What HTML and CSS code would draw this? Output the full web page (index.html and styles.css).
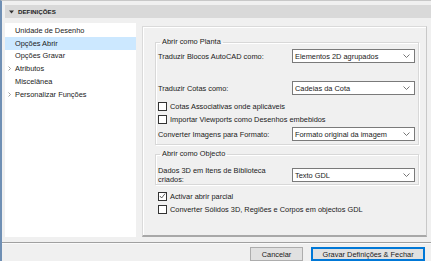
FILE: index.html
```html
<!DOCTYPE html>
<html>
<head>
<meta charset="utf-8">
<link rel="stylesheet" href="styles.css">
</head>
<body>
<div class="window">
  <div class="header">
    <svg class="tri" width="5" height="4" viewBox="0 0 5 4"><polygon points="0,0.5 5,0.5 2.5,3.5" fill="#333"/></svg>
    <span class="title">DEFINIÇÕES</span>
  </div>
  <div class="main">
    <ul class="sidebar">
      <li class="item">Unidade de Desenho</li>
      <li class="item selected">Opções Abrir</li>
      <li class="item">Opções Gravar</li>
      <li class="item"><svg class="arrow" width="3" height="5" viewBox="0 0 3 5"><polyline points="0.5,0.5 2.5,2.5 0.5,4.5" fill="none" stroke="#888" stroke-width="0.8"/></svg>Atributos</li>
      <li class="item">Miscelânea</li>
      <li class="item"><svg class="arrow" width="3" height="5" viewBox="0 0 3 5"><polyline points="0.5,0.5 2.5,2.5 0.5,4.5" fill="none" stroke="#888" stroke-width="0.8"/></svg>Personalizar Funções</li>
    </ul>
    <div class="content">
      <fieldset class="group g1">
        <legend>Abrir como Planta</legend>
        <div class="row r1">
          <span class="label">Traduzir Blocos AutoCAD como:</span>
          <div class="select"><span>Elementos 2D agrupados</span><svg class="chev" width="7" height="4" viewBox="0 0 7 4"><polyline points="0.5,0.5 3.5,3.5 6.5,0.5" fill="none" stroke="#666" stroke-width="0.9"/></svg></div>
        </div>
        <div class="row r2">
          <span class="label">Traduzir Cotas como:</span>
          <div class="select"><span>Cadeias da Cota</span><svg class="chev" width="7" height="4" viewBox="0 0 7 4"><polyline points="0.5,0.5 3.5,3.5 6.5,0.5" fill="none" stroke="#666" stroke-width="0.9"/></svg></div>
        </div>
        <div class="check c1"><span class="box"></span>Cotas Associativas onde aplicáveis</div>
        <div class="check c2"><span class="box"></span>Importar Viewports como Desenhos embebidos</div>
        <div class="row r3">
          <span class="label">Converter Imagens para Formato:</span>
          <div class="select"><span>Formato original da imagem</span><svg class="chev" width="7" height="4" viewBox="0 0 7 4"><polyline points="0.5,0.5 3.5,3.5 6.5,0.5" fill="none" stroke="#666" stroke-width="0.9"/></svg></div>
        </div>
      </fieldset>
      <fieldset class="group g2">
        <legend>Abrir como Objecto</legend>
        <div class="row r4">
          <span class="label">Dados 3D em Itens de Biblioteca<br>criados:</span>
          <div class="select"><span>Texto GDL</span><svg class="chev" width="7" height="4" viewBox="0 0 7 4"><polyline points="0.5,0.5 3.5,3.5 6.5,0.5" fill="none" stroke="#666" stroke-width="0.9"/></svg></div>
        </div>
      </fieldset>
      <div class="check c3"><span class="box"><svg width="8" height="8" viewBox="0 0 8 8"><polyline points="1,4 3,6.3 7,1.2" fill="none" stroke="#333" stroke-width="0.9"/></svg></span>Activar abrir parcial</div>
      <div class="check c4"><span class="box"></span>Converter Sólidos 3D, Regiões e Corpos em objectos GDL</div>
    </div>
  </div>
  <div class="separator"></div>
  <div class="footer">
    <button class="btn cancel">Cancelar</button>
    <button class="btn primary">Gravar Definições &amp; Fechar</button>
  </div>
</div>
</body>
</html>
```
FILE: styles.css
```css
* { box-sizing: border-box; }
html, body { margin: 0; padding: 0; }
body {
  width: 431px;
  height: 261px;
  overflow: hidden;
  background: #f0f0f0;
  font-family: "Liberation Sans", Arial, sans-serif;
  font-size: 7.4px;
  color: #1a1a1a;
}
.window {
  width: 431px;
  height: 261px;
  border-left: 2px solid #6f8fb4;
  border-top: 1px solid #c8c8c8;
  display: flex;
  flex-direction: column;
}
.header {
  margin: 4px 0 0 3px;
  height: 13px;
  background: #d9d9d9;
  display: flex;
  align-items: center;
  padding-left: 4px;
}
.tri { margin-right: 4px; }
.title {
  font-weight: bold;
  font-size: 6.2px;
  color: #222;
}
.main {
  display: flex;
  margin-top: 5px;
  margin-left: 3px;
  height: 215px;
}
.sidebar {
  list-style: none;
  margin: 0;
  padding: 1px 0 0 0;
  width: 131px;
  height: 214px;
  background: #fff;
}
.item {
  height: 12.8px;
  display: flex;
  align-items: center;
  padding-left: 10px;
  position: relative;
  white-space: nowrap;
}
.item.selected { background: #cce8ff; }
.arrow { position: absolute; left: 3px; top: 4px; }
.content {
  margin-left: 6px;
  margin-top: 3px;
  width: 285px;
  height: 211px;
  border: 1px solid #dadada;
  border-bottom: 2px solid #a8a8a8;
  border-right: 1px solid #c8c8c8;
  background: #f0f0f0;
  padding: 0 0 0 12px;
  box-shadow: inset 1px 1px 0 #fff;
}
.group {
  margin: 0;
  width: 264px;
  border: 1px solid #d8d8d8;
  box-shadow: inset 1px 1px 0 #fff, 1px 1px 0 #fff;
  padding: 0 3px 0 2px;
}
.g1 { margin-top: 10px; height: 108px; }
.g2 { margin-top: 4px; height: 36px; }
legend {
  padding: 0 2px;
  margin-left: 2px;
  line-height: 10px;
  white-space: nowrap;
}
.row {
  display: flex;
  align-items: center;
  justify-content: space-between;
}
.label { white-space: nowrap; line-height: 9px; }
.select {
  width: 123px;
  height: 14px;
  background: #fff;
  border: 1px solid #7a7a7a;
  display: flex;
  align-items: center;
  justify-content: space-between;
  padding: 0 4px 0 2px;
  white-space: nowrap;
}
.r1 { margin-top: 2px; height: 14px; }
.r2 { margin-top: 18px; height: 14px; }
.r3 { margin-top: 3px; height: 14px; }
.r4 { margin-top: 7px; height: 18px; }
.check {
  display: flex;
  align-items: center;
  height: 10px;
  white-space: nowrap;
}
.c1 { margin-top: 6px; }
.c2 { margin-top: 3px; }
.c3 { margin-top: 6px; margin-left: 3px; }
.c4 { margin-top: 3px; margin-left: 3px; }
.box {
  width: 9px;
  height: 9px;
  border: 1px solid #333;
  background: #fff;
  margin-right: 3px;
  display: flex;
  align-items: center;
  justify-content: center;
}
.separator {
  margin-top: 4px;
  height: 2px;
  border-top: 1px solid #a0a0a0;
  border-bottom: 1px solid #fafafa;
}
.footer {
  display: flex;
  justify-content: flex-end;
  gap: 8px;
  padding: 3px 6px 0 0;
}
.btn {
  font-family: inherit;
  font-size: 7.4px;
  height: 14px;
  padding: 0;
  background: #e1e1e1;
  border: 1px solid #adadad;
  color: #1a1a1a;
}
.cancel { width: 53px; }
.primary { width: 114px; border: 1px solid #0078d7; box-shadow: inset 0 0 0 1px #0078d7; }
```
